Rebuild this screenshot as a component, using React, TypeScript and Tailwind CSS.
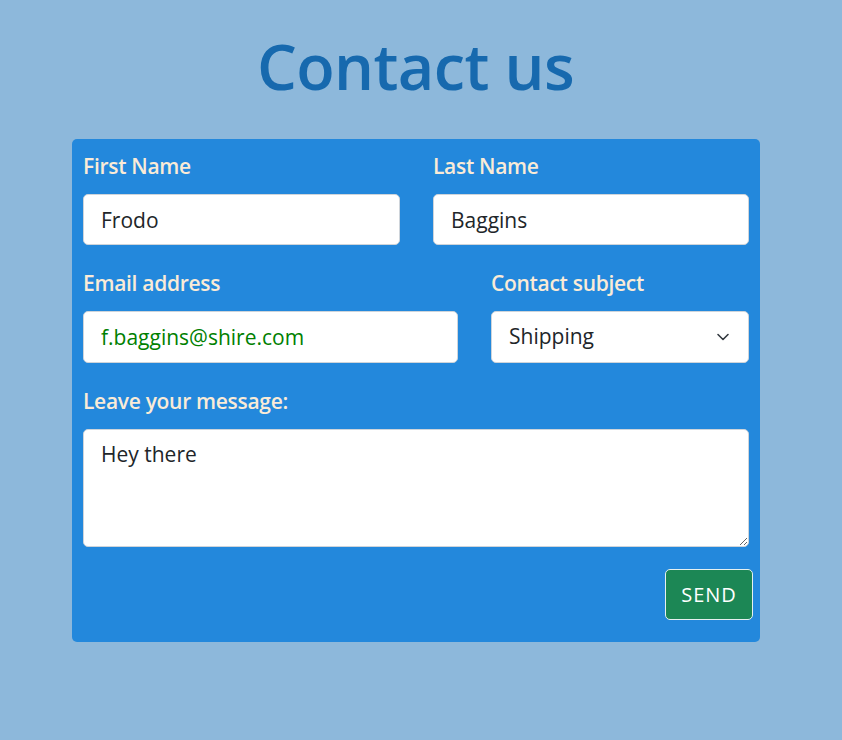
import React from "react";

const font = { fontFamily: '"Open Sans", "Noto Sans", sans-serif' };
const labelCls =
  "block text-[21px] leading-[30px] font-semibold text-[#FAEBD7] tracking-[-0.3px]";
const inputCls =
  "mt-[13px] block h-[51px] w-full rounded-[5px] border border-[#ced4da] bg-white px-[17px] text-[21px] text-[#212529] outline-none";

export default function App() {
  return (
    <div className="min-h-[740px] w-full bg-[#8DB8DB]" style={font}>
      <div className="flex flex-col items-center pt-[22px] pr-[11px]">
        <h1 className="text-[63px] leading-[88px] font-semibold text-[#1769AE] tracking-[-0.6px]">
          Contact us
        </h1>
      </div>
      <div className="mx-[72px] mt-[29px] w-[688px] h-[503px] rounded-[5px] bg-[#2388DC] px-[11px] pt-[12px]">
        <div className="flex gap-[33px]">
          <div className="w-[317px]">
            <label className={labelCls}>First Name</label>
            <input readOnly value="Frodo" className={inputCls} />
          </div>
          <div className="w-[316px]">
            <label className={labelCls}>Last Name</label>
            <input readOnly value="Baggins" className={inputCls} />
          </div>
        </div>
        <div className="mt-[23px] flex gap-[33px]">
          <div className="w-[375px]">
            <label className={labelCls}>Email address</label>
            <input
              readOnly
              value="f.baggins@shire.com"
              className="mt-[13px] block h-[52px] w-full rounded-[5px] border border-[#ced4da] bg-white px-[17px] text-[21px] text-[#008000] outline-none"
            />
          </div>
          <div className="w-[258px]">
            <label className={labelCls}>Contact subject</label>
            <div className="relative mt-[13px] flex h-[52px] w-full items-center rounded-[5px] border border-[#ced4da] bg-white pl-[17px] text-[21px] text-[#212529]">
              <span>Shipping</span>
              <svg
                className="absolute right-[18px] top-[20px]"
                width="14"
                height="10"
                viewBox="0 0 14 10"
                fill="none"
              >
                <path d="M2 2.5 L7 7.5 L12 2.5" stroke="#343a40" strokeWidth="1.6" strokeLinecap="round" strokeLinejoin="round" />
              </svg>
            </div>
          </div>
        </div>
        <div className="mt-[23px]">
          <label className={labelCls}>Leave your message:</label>
          <textarea
            readOnly
            value="Hey there"
            className="mt-[13px] block h-[118px] w-full resize-y rounded-[5px] border border-[#ced4da] bg-white px-[17px] py-[9px] text-[21px] leading-[30px] text-[#212529] outline-none"
          />
        </div>
        <div className="mt-[22px] flex justify-end -mr-[4px]">
          <button className="h-[51px] w-[88px] rounded-[5px] border border-[#e6f0f0] bg-[#1C8755] text-[20px] tracking-[1px] text-white">
            SEND
          </button>
        </div>
      </div>
    </div>
  );
}
